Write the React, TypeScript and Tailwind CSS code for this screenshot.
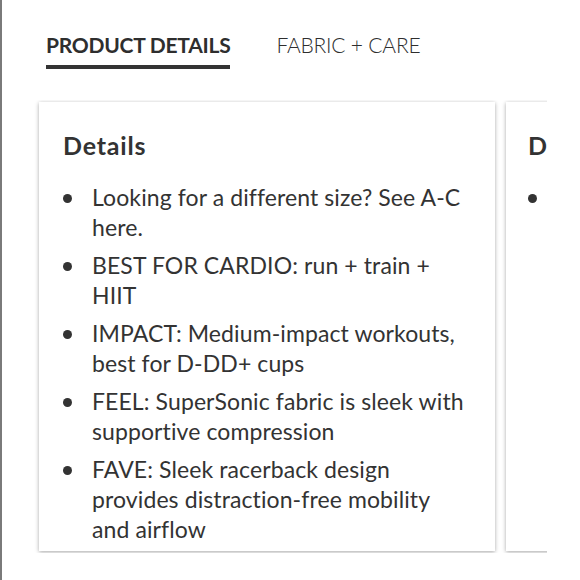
const items = [
  'Looking for a different size? See A-C here.',
  'BEST FOR CARDIO: run + train + HIIT',
  'IMPACT: Medium-impact workouts, best for D-DD+ cups',
  'FEEL: SuperSonic fabric is sleek with supportive compression',
  'FAVE: Sleek racerback design provides distraction-free mobility and airflow',
]

const font = { fontFamily: 'Lato, "Liberation Sans", sans-serif' }

export default function App() {
  return (
    <div
      className="w-[580px] h-[580px] bg-white border-l-2 border-[#7a7a7a] overflow-hidden text-[#333]"
      style={font}
    >
      {/* Tabs */}
      <div className="flex items-start pt-[30px] pl-[44px] gap-[46px]">
        <div className="flex flex-col">
          <span className="text-[21px] leading-[30px] font-bold tracking-[-0.25px] text-[#2e2e2e]">
            PRODUCT DETAILS
          </span>
          <div className="mt-[5px] h-[4px] bg-[#333]" />
        </div>
        <span className="text-[21px] leading-[30px] font-light tracking-[-0.2px] text-[#2e2e2e]">
          FABRIC + CARE
        </span>
      </div>

      {/* Cards */}
      <div className="mt-[31px] w-[545px] flex gap-[11px] pl-[37px] overflow-hidden py-[2px]">
        <div className="shrink-0 w-[456px] h-[449px] bg-white shadow-[0_1px_4px_rgba(0,0,0,0.35)] pl-[24px] pr-[25px] pt-[26px] overflow-hidden">
          <h3 className="text-[25px] leading-[34px] font-bold tracking-[0.8px] text-[#333]">Details</h3>
          <ul className="mt-[20px] flex flex-col gap-[8px]">
            {items.map((t) => (
              <li key={t} className="flex items-start">
                <span className="mt-[12px] w-[9px] h-[9px] rounded-full bg-[#333] shrink-0" />
                <span className="ml-[20px] text-[23px] leading-[30px] tracking-[0.1px] text-[#333]">{t}</span>
              </li>
            ))}
          </ul>
        </div>
        <div className="shrink-0 w-[456px] h-[449px] bg-white shadow-[0_1px_4px_rgba(0,0,0,0.35)] pl-[22px] pt-[26px]">
          <h3 className="text-[25px] leading-[34px] font-bold tracking-[0.8px] text-[#333]">Details</h3>
          <ul className="mt-[20px]">
            <li className="flex items-start">
              <span className="mt-[12px] w-[9px] h-[9px] rounded-full bg-[#333] shrink-0" />
            </li>
          </ul>
        </div>
      </div>
    </div>
  )
}
